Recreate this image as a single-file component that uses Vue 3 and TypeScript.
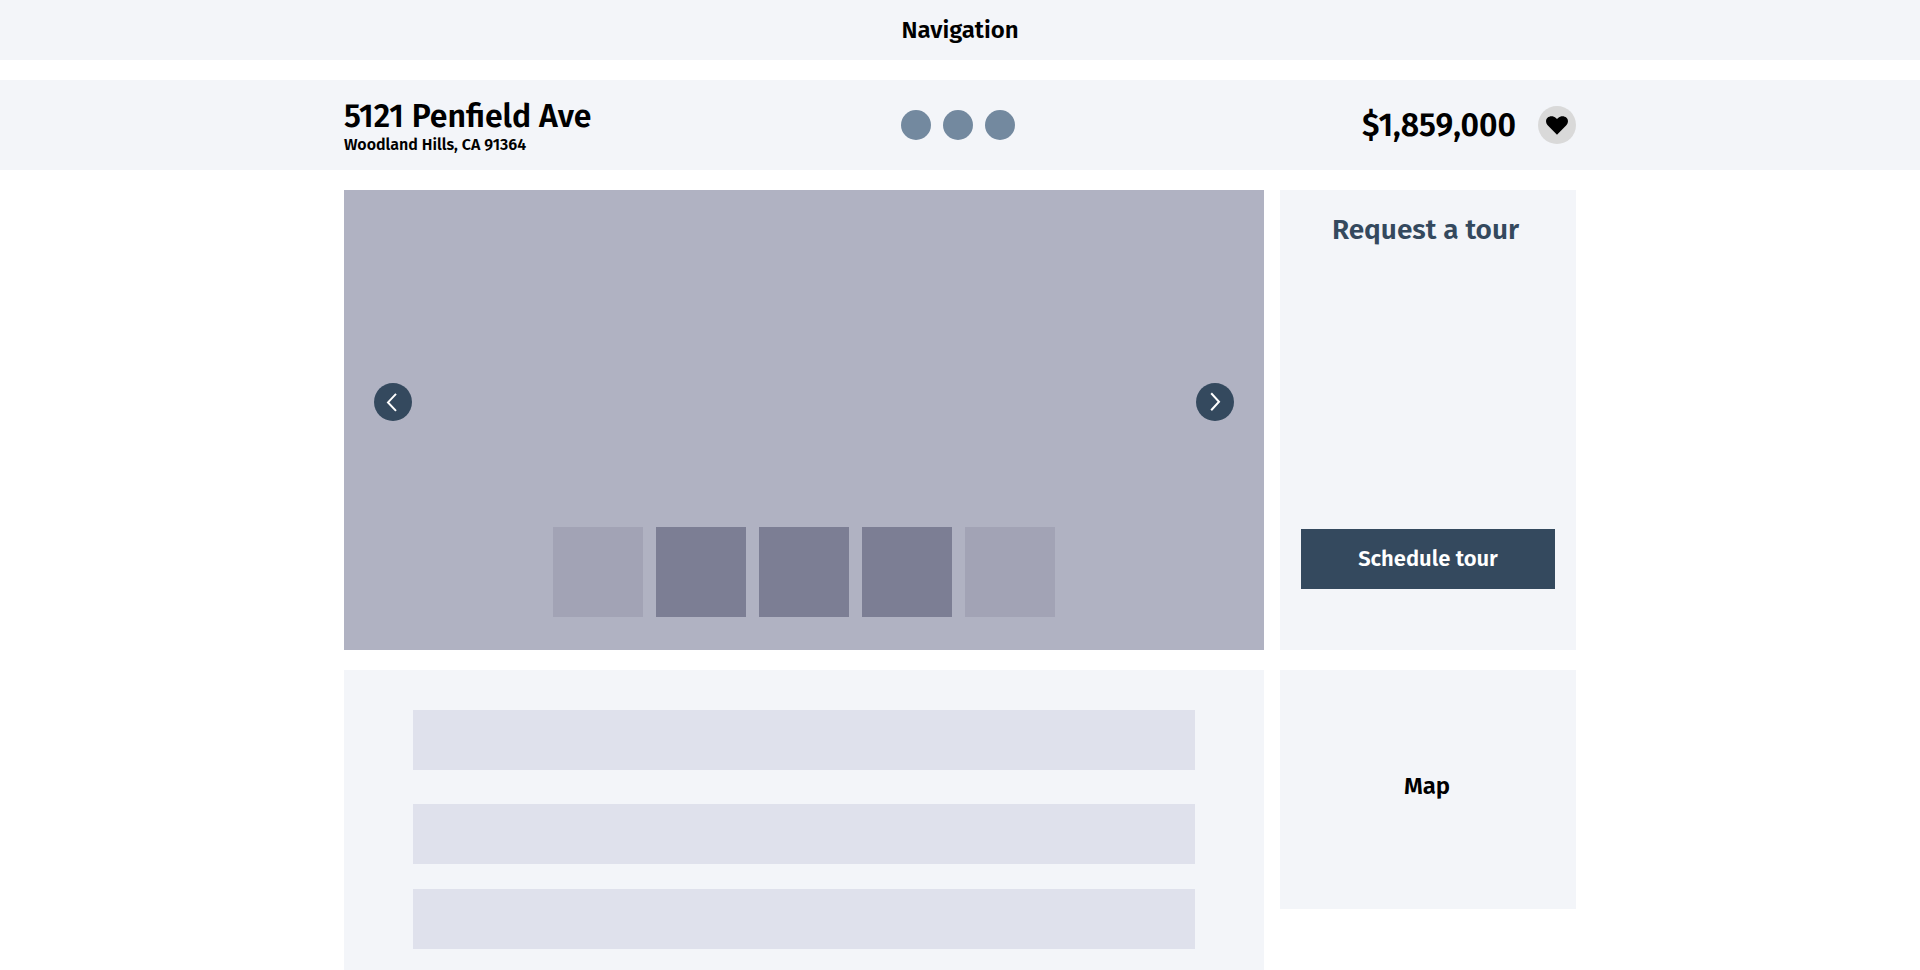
<script setup lang="ts">
interface Thumbnail {
  id: number
  faded: boolean
}

const address = { street: '5121 Penfield Ave', city: 'Woodland Hills, CA 91364' }
const price = '$1,859,000'
const thumbnails: Thumbnail[] = [
  { id: 1, faded: true },
  { id: 2, faded: false },
  { id: 3, faded: false },
  { id: 4, faded: false },
  { id: 5, faded: true },
]
</script>

<template>
  <div class="page">
    <nav class="navigation"><span class="nav-label">Navigation</span></nav>

    <header class="summary">
      <div class="summary-inner">
        <div class="address">
          <h1 class="street">{{ address.street }}</h1>
          <p class="city">{{ address.city }}</p>
        </div>
        <div class="dots">
          <span v-for="n in 3" :key="n" class="dot"></span>
        </div>
        <div class="offer">
          <span class="price">{{ price }}</span>
          <button class="favorite" type="button" aria-label="Save home">
            <svg width="22" height="19" viewBox="0 0 22 19">
              <path d="M11 18.700L1.900 9.500C-.5 7-.5 3.500 1.500 1.700C4-.6 7.700-.2 9.900 2L11 3.100L12.100 2C14.300-.2 18-.6 20.500 1.700C22.500 3.500 22.500 7 20.100 9.500Z" />
            </svg>
          </button>
        </div>
      </div>
    </header>

    <main class="content">
      <section class="gallery">
        <div class="controls">
          <button class="arrow" type="button" aria-label="Previous photo">
            <svg width="38" height="38" viewBox="0 0 38 38"><path d="M22 10.900L14 19.400L22 27.900" /></svg>
          </button>
          <button class="arrow" type="button" aria-label="Next photo">
            <svg width="38" height="38" viewBox="0 0 38 38"><path d="M15.200 10.300L23 18.700L15.200 27.200" /></svg>
          </button>
        </div>
        <div class="thumbnails">
          <div v-for="t in thumbnails" :key="t.id" class="thumbnail" :class="{ faded: t.faded }"></div>
        </div>
      </section>

      <aside class="tour">
        <h2 class="tour-title">Request a tour</h2>
        <button class="schedule" type="button"><span class="schedule-label">Schedule tour</span></button>
      </aside>

      <section class="details">
        <div v-for="n in 3" :key="n" class="detail"></div>
      </section>

      <aside class="map"><span class="map-label">Map</span></aside>
    </main>
  </div>
</template>

<style>
body {
  background: #fff;
}
</style>

<style scoped>
.page {
  height: 970px;
  overflow: hidden;
  font-family: "Fira Sans", "Noto Sans", sans-serif;
  font-weight: 600;
  color: #000;
}
h1,
h2,
p {
  margin: 0;
  font-weight: inherit;
  white-space: nowrap;
}
button {
  border: 0;
  padding: 0;
  font: inherit;
}
svg {
  display: block;
}
.navigation {
  height: 60px;
  margin-bottom: 20px;
  background: #f3f5f9;
  text-align: center;
}
.nav-label {
  font-size: 24px;
  line-height: 60px;
}
.summary {
  height: 90px;
  background: #f3f5f9;
}
.summary-inner {
  width: 1232px;
  height: 100%;
  margin: 0 auto;
  display: grid;
  grid-template-columns: 1fr 114px 1fr;
  align-items: center;
}
.address {
  padding-top: 1px;
}
.street {
  font-size: 32px;
  line-height: 38px;
}
.city {
  font-size: 16px;
  line-height: 19px;
}
.dots {
  display: flex;
  gap: 12px;
  margin-left: -2px;
}
.dot {
  width: 30px;
  height: 30px;
  border-radius: 50%;
  background: #73899f;
}
.offer {
  display: flex;
  justify-content: flex-end;
  align-items: center;
}
.price {
  margin-right: 22px;
  font-size: 32px;
  line-height: 38px;
}
.favorite {
  width: 38px;
  height: 38px;
  display: flex;
  align-items: center;
  justify-content: center;
  border-radius: 50%;
  background: #d9d9d9;
}
.content {
  width: 1232px;
  margin: 20px auto 0;
  display: grid;
  grid-template-columns: 920px 296px;
  grid-template-rows: 460px 320px;
  gap: 20px 16px;
}
.gallery {
  box-sizing: border-box;
  padding: 193px 30px 33px;
  display: flex;
  flex-direction: column;
  justify-content: space-between;
  background: #b0b2c2;
}
.controls {
  display: flex;
  justify-content: space-between;
}
.arrow {
  width: 38px;
  height: 38px;
  border-radius: 50%;
  background: #34495e;
}
.arrow path {
  fill: none;
  stroke: #fff;
  stroke-width: 2;
}
.thumbnails {
  display: flex;
  justify-content: center;
  gap: 13px;
}
.thumbnail {
  width: 90px;
  height: 90px;
  background: #7c7e94;
}
.thumbnail.faded {
  background: #a2a3b5;
}
.tour {
  box-sizing: border-box;
  padding: 21px 21px 61px;
  display: flex;
  flex-direction: column;
  justify-content: space-between;
  background: #f3f5f9;
}
.tour-title {
  padding-right: 5px;
  text-align: center;
  color: #34495e;
  font-size: 28px;
  line-height: 38px;
}
.schedule {
  height: 60px;
  background: #34495e;
  color: #fff;
}
.schedule-label {
  font-size: 22px;
  line-height: 60px;
}
.details {
  height: 340px;
  box-sizing: border-box;
  padding: 40px 69px 0;
  background: #f3f5f9;
}
.detail {
  height: 60px;
  margin-bottom: 34px;
  background: #dfe1ec;
}
.detail:nth-child(2) {
  margin-bottom: 25px;
}
.map {
  height: 239px;
  padding-right: 2px;
  box-sizing: border-box;
  background: #f3f5f9;
  text-align: center;
}
.map-label {
  font-size: 24px;
  line-height: 232px;
}
</style>
